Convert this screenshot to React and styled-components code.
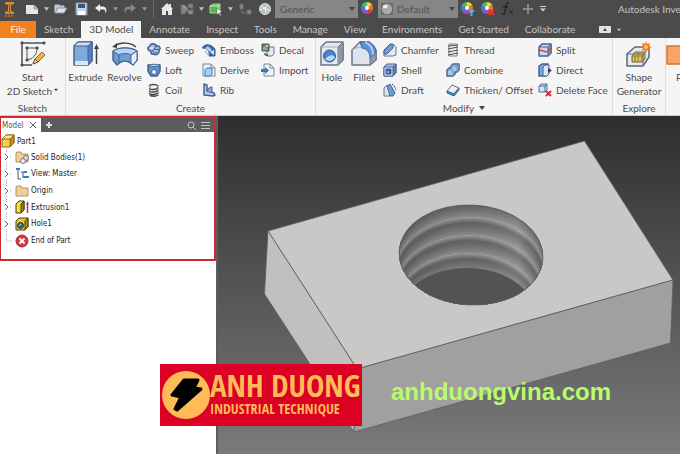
import styled, { createGlobalStyle } from "styled-components";

const GlobalStyle = createGlobalStyle`
  * {
    box-sizing: border-box;
  }

  body {
    margin: 0;
    font-family: Lato, "Open Sans", sans-serif;
    font-size: 10px;
    color: #4c4c4c;
  }

  button,
  select {
    font: inherit;
    color: inherit;
    border: 0;
    padding: 0;
    background: none;
  }

  svg {
    display: block;
    flex: none;
  }
`;

const Window = styled.div`
  display: flex;
  flex-direction: column;
  width: 100%;
  height: 100vh;
  overflow: hidden;
`;

/* ---------- title bar ---------- */

const TitleBar = styled.header`
  display: flex;
  align-items: center;
  height: 21px;
  padding-bottom: 3px;
  background: #4b4b4b;
  color: #c4c4c4;
  white-space: nowrap;
  overflow: hidden;
`;

const AppMark = styled.div`
  flex: none;
  width: 22px;
  padding-left: 3px;
`;

const Tool = styled.button`
  display: flex;
  flex: none;
  align-items: center;
  justify-content: center;
  width: ${({ $narrow }) => ($narrow ? "9px" : "20px")};
  height: 18px;
`;

const Separator = styled.span`
  flex: none;
  width: 1px;
  height: 18px;
  margin: 0 3px 0 4px;
  background: #686868;
`;

const Picker = styled.label`
  display: flex;
  flex: none;
  align-items: center;
  width: ${({ $width }) => $width};
  height: 18px;
  padding: 0 3px;
  gap: 2px;
  background: #868686;
  color: #525252;

  select {
    flex: 1;
    min-width: 0;
    padding-left: 2px;
    appearance: none;
    outline: none;
  }
`;

const Title = styled.h1`
  margin: 0 0 0 71px;
  font-size: 10px;
  font-weight: 400;
`;

/* ---------- ribbon tabs ---------- */

const Tabs = styled.nav`
  display: flex;
  flex: none;
  height: 17px;
  background: #4b4b4b;
  color: #c4c4c4;
  white-space: nowrap;
`;

const Tab = styled.button`
  padding: 0 8px;
  line-height: 17px;
  background: ${({ $active }) => ($active ? "#f5f5f5" : "transparent")};
  color: ${({ $active }) => ($active ? "#4c4c4c" : "inherit")};
`;

const FileTab = styled(Tab)`
  width: 36px;
  background: #f08120;
  color: #fff0dc;
`;

const PanelToggle = styled.button`
  display: flex;
  align-items: center;
  gap: 6px;
  margin-left: 16px;
`;

/* ---------- ribbon ---------- */

const Ribbon = styled.div`
  display: flex;
  flex: none;
  height: 78px;
  background: #f5f5f5;
  border-bottom: 1px solid #c9c9c9;
  overflow: hidden;
`;

const Group = styled.section`
  display: flex;
  flex: none;
  flex-direction: column;
  width: ${({ $width }) => $width};
  border-right: 1px solid #dedede;
  white-space: nowrap;
`;

const GroupBody = styled.div`
  display: flex;
  justify-content: ${({ $center }) => ($center ? "center" : "flex-start")};
  height: 64px;
  padding-top: 2px;
`;

const GroupName = styled.h2`
  display: flex;
  align-items: center;
  justify-content: center;
  gap: 5px;
  margin: 0;
  font-size: 10px;
  font-weight: 400;
  line-height: 14px;
`;

const BigButton = styled.button`
  display: flex;
  flex: none;
  flex-direction: column;
  align-items: center;
  width: ${({ $width }) => $width};
  line-height: 14px;

  svg {
    margin: 1px 0 3px;
  }
`;

const BigLabel = styled.span`
  display: flex;
  align-items: center;
  gap: 2px;
`;

const Commands = styled.div`
  display: grid;
  grid-template-columns: ${({ $columns }) => $columns};
  grid-template-rows: repeat(3, 20px);
  grid-auto-flow: column;
  padding-left: 3px;
`;

const Command = styled.button`
  display: flex;
  align-items: center;
  gap: 4px;
`;

/* ---------- model browser ---------- */

const Workspace = styled.main`
  position: relative;
  display: flex;
  flex: 1;
  min-height: 0;
`;

const Sidebar = styled.aside`
  flex: none;
  width: 218px;
  background: #fff;
  border-right: 2px solid #5c5c5c;
`;

const Browser = styled.section`
  border: 2px solid #d0292e;
  border-left-width: 1px;
  height: 145px;
  font-family: "DejaVu Sans Condensed", "DejaVu Sans", sans-serif;
  font-size: 8px;
  color: #222;
`;

const BrowserHead = styled.div`
  display: flex;
  align-items: center;
  height: 14px;
  padding-right: 4px;
  gap: 5px;
  background: #5c5c5c;
`;

const BrowserTab = styled.button`
  display: flex;
  align-items: center;
  gap: 6px;
  width: 40px;
  height: 14px;
  padding-left: 1px;
  background: #fff;
  color: #555;
`;

const HeadActions = styled.div`
  display: flex;
  gap: 5px;
  margin-left: auto;
`;

const Tree = styled.ul`
  display: flex;
  flex-direction: column;
  min-height: 117px;
  margin: 0;
  padding: 2px 0 0;
  list-style: none;
`;

const TreeItem = styled.li`
  display: flex;
  flex: 1;
  align-items: center;
  gap: 2px;
`;

const Branch = styled.span`
  flex: none;
  align-self: stretch;
  width: 12px;
  display: flex;
  align-items: center;
`;

/* ---------- viewport ---------- */

const Viewport = styled.section`
  flex: 1;
  min-width: 0;
  background: linear-gradient(#2e2e2e, #545454 50%, #7a7a7a);
  overflow: hidden;

  svg {
    width: 100%;
    height: 100%;
  }
`;

const Banner = styled.div`
  position: absolute;
  left: 160px;
  bottom: 28px;
  display: flex;
  align-items: center;
  width: 202px;
  height: 62px;
  padding-left: 2px;
  background: #dc0024;
  color: #ffbb58;
  font-family: "Open Sans Condensed", "Roboto Condensed",
    "Liberation Sans Narrow", "Liberation Sans", sans-serif;
  font-weight: 700;
  white-space: nowrap;
`;

const BannerName = styled.div`
  font-size: 31px;
  line-height: 28px;
`;

const BannerLine = styled.div`
  font-size: 14px;
  line-height: 20px;
`;

const SiteLink = styled.a`
  position: absolute;
  left: 391px;
  bottom: 48px;
  color: #b8fc6c;
  font: 700 24px/28px "Liberation Sans", Arial, sans-serif;
  text-decoration: none;
`;

/* ---------- icons ---------- */

const Icon = ({ size = 14, box = size, children }) => (
  <svg
    width={size}
    height={size}
    viewBox={`0 0 ${box} ${box}`}
    fill="none"
    stroke="#47638f"
    strokeLinejoin="round"
    aria-hidden="true"
  >
    {children}
  </svg>
);

const Caret = ({ color = "#c9c9c9", w = 5 }) => (
  <svg width={w} height="4" viewBox="0 0 6 4" aria-hidden="true">
    <path d="M0 0h6L3 4z" fill={color} />
  </svg>
);

const Wheel = ({ children }) => (
  <Icon box={14}>
    <g stroke="none">
      <path d="M6 6V0a6 6 0 0 1 5.200 3z" fill="#f5d33a" />
      <path d="M6 6l5.200-3a6 6 0 0 1 0 6z" fill="#e87a2b" />
      <path d="M6 6l5.200 3A6 6 0 0 1 6 12z" fill="#e23b46" />
      <path d="M6 6v6A6 6 0 0 1 .8 9z" fill="#9a4fd0" />
      <path d="M6 6L.8 9a6 6 0 0 1 0-6z" fill="#3f7fe0" />
      <path d="M6 6L.8 3A6 6 0 0 1 6 0z" fill="#55bd55" />
      <circle cx="6" cy="6" r="2" fill="#fff" />
      {children}
    </g>
  </Icon>
);

const icons = {
  mark: (
    <svg width="13" height="17" viewBox="0 0 13 17" aria-hidden="true">
      <path d="M2 1h9v2l-3 1v6l3 1v2H2v-2l3-1V4L2 3z" fill="#d88a35" />
      <path d="M6 3h1v9H6z" fill="#8a5118" />
      <path d="M2 15h9" stroke="#b06a20" strokeWidth="2" strokeDasharray="2 1" />
    </svg>
  ),
  page: (
    <Icon>
      <path d="M1 3h8l4 4v5H1z" fill="#e4e6ea" stroke="none" />
      <path d="M9 3v4h4" fill="#b8bcc4" stroke="#9ba0aa" />
    </Icon>
  ),
  open: (
    <Icon>
      <path d="M1 11V3h4l1 1h4v2" fill="#b9c2cf" stroke="#c6ced9" />
      <path d="M1 11l3-5h9l-3 5z" fill="#dde3ea" stroke="#8793a3" />
    </Icon>
  ),
  save: (
    <Icon>
      <rect x="2" y="1" width="11" height="12" fill="#c9d4e2" stroke="#7f93ae" />
      <path d="M4 2h7v4H4z" fill="#39557c" stroke="none" />
      <path d="M4 9h7v4H4z" fill="#fff" stroke="none" />
    </Icon>
  ),
  undo: (
    <Icon>
      <path d="M6 2L1 6l5 4V7.500h3c2 0 3 2 2 4.500 3-4 1-7-2-7.500H6z" fill="#eee" stroke="none" />
    </Icon>
  ),
  redo: (
    <Icon>
      <path d="M8 2l5 4-5 4V7.500H5c-2 0-3 2-2 4.500C0 8 2 5 5 4.500h3z" fill="#858585" stroke="none" />
    </Icon>
  ),
  home: (
    <Icon>
      <path d="M1 7l6-6 2 2V2h2v3l2 2h-1v6H8V9H6v4H2V7z" fill="#e6e8ea" stroke="none" />
    </Icon>
  ),
  material: (
    <Icon>
      <path d="M1 3h4l3 3-3 6H1zM8 2h5v4H9zM8 9l5-2v5H8z" fill="#858585" stroke="#666" />
      <path d="M2 3l10 9" stroke="#aaa" />
    </Icon>
  ),
  pick: (
    <Icon>
      <path d="M1 4l3-2h7v7l-2 2H1z" fill="#57b455" stroke="#9bdb95" />
      <path d="M1 4h8v7M9 4l2-2" stroke="#d2f0cd" />
      <path d="M8 6v7l2-2 1 3 1-1-1-3h2z" fill="#fff" stroke="#555" strokeWidth=".5" />
    </Icon>
  ),
  link: (
    <Icon>
      <path d="M2 2h3v5H2zM9 8h4v4H9z" fill="#8b8b8b" stroke="#6c6c6c" />
      <path d="M4 8v3h4" stroke="#777" />
    </Icon>
  ),
  globe: (
    <Icon>
      <circle cx="7" cy="7" r="5.500" fill="#b5bdc2" stroke="#d8dcde" />
      <path d="M3 4l4 2 3-3M7 6l1 5M2 8l5-2 5 3" stroke="#f0f0f0" />
    </Icon>
  ),
  ball: (
    <Icon size={12} box={14}>
      <path d="M0 0h14v14H0z" fill="#6b6b6b" stroke="none" />
      <circle cx="7" cy="7" r="6" fill="#a9a9a9" stroke="none" />
      <ellipse cx="5" cy="4" rx="3" ry="2" fill="#efefef" stroke="none" />
    </Icon>
  ),
  wheel: <Wheel />,
  wheelPin: (
    <Wheel>
      <path d="M7 8h7l-2.500 3v3h-2v-3z" fill="#49b4e6" />
    </Wheel>
  ),
  wheelCut: (
    <Wheel>
      <path d="M8 8l5 5M13 8l-5 5" stroke="#e23434" strokeWidth="2" />
    </Wheel>
  ),
  fx: (
    <Icon>
      <path d="M8 1C5 0 5 4 4.500 7S4 13 1 12M2 5h5" stroke="#262626" strokeWidth="1.500" />
      <path d="M8 8l4 4M12 8l-4 4" stroke="#262626" />
    </Icon>
  ),
  plus: (
    <Icon>
      <path d="M7 2v10M2 7h10" stroke="#8a8a8a" strokeWidth="2" />
    </Icon>
  ),
  more: (
    <Icon size={8}>
      <path d="M1 1.500h6" stroke="#d0d0d0" />
      <path d="M1 3.500h6l-3 3z" fill="#d0d0d0" stroke="none" />
    </Icon>
  ),

  sketch: (
    <Icon size={26}>
      <g stroke="#4e5258">
        <path d="M2 2v22M2 2h22M2 24h10" strokeWidth="1.500" />
        <path d="M7 19V7h10c0 7-4 11-10 12z" />
        <path d="M1 1h2v2H1zM23 1h2v2h-2zM1 23h2v2H1zM6 6h2v2H6zM16 6h2v2h-2zM6 18h2v2H6z" fill="#4e5258" />
      </g>
      <path d="M13 23l2-5 7-7 3 3-7 7z" fill="#f1b53b" stroke="#8a6322" />
      <path d="M13 23l2-5 3 3z" fill="#f4e1bb" stroke="#6a5330" />
    </Icon>
  ),
  extrude: (
    <Icon size={26}>
      <path d="M1 5l4-4h14v19l-4 4H1z" fill="#7fa8dd" strokeWidth="1.500" />
      <path d="M1 5l4-4h14l-4 4z" fill="#c9dcf3" />
      <path d="M15 5l4-4v19l-4 4z" fill="#5580bd" />
      <path d="M2 20h13v4H2z" fill="#dce6f2" stroke="none" />
      <path d="M23.500 23V6" stroke="#444" strokeWidth="1.500" />
      <path d="M21 8l2.500-5L26 8z" fill="#444" stroke="none" />
    </Icon>
  ),
  revolve: (
    <Icon size={26}>
      <path d="M3 5c5-4 15-4 21 1" stroke="#3f3f3f" strokeWidth="1.500" />
      <path d="M0 6l5-4v5z" fill="#3f3f3f" stroke="none" />
      <path d="M1 10c6-4 18-4 24 0v9l-4 5-4-3c-2-1-6-1-8 0l-4 3-4-5z" fill="#6e9cd8" strokeWidth="1.500" />
      <path d="M1 10c6-4 18-4 24 0l-6 4c-3-2-9-2-12 0z" fill="#b9d3f2" />
      <path d="M19 14l6-4v9l-4 5-2-2z" fill="#e8eef6" />
      <path d="M7 14v8" />
    </Icon>
  ),
  hole: (
    <Icon size={26}>
      <path d="M2 6l5-5h17v18l-5 5H2z" fill="#e4e9f0" stroke="#6a7484" strokeWidth="1.500" />
      <path d="M19 6l5-5v18l-5 5z" fill="#8d99aa" stroke="#6a7484" />
      <path d="M2 6h17v18" stroke="#a4aebd" />
      <circle cx="10.500" cy="15" r="6" fill="#4a80cf" stroke="#35578f" />
      <path d="M6 18a6 6 0 0 0 10-2c-3-3-6-2-10 2z" fill="#b9d6f5" stroke="none" />
    </Icon>
  ),
  fillet: (
    <Icon size={26}>
      <path d="M1 24V9l8-8h9l7 8v10l-6 5z" fill="#dfe4ec" stroke="#6a7484" strokeWidth="1.500" />
      <path d="M9 1h8c5 1 8 5 8 11l-6 5c0-6-3-9-8-10z" fill="#5d92d8" />
      <path d="M14 1c5 2 8 6 8 13" stroke="#a8cbf2" strokeWidth="2" />
      <path d="M19 17v7l6-5v-7z" fill="#8f9bad" stroke="#6a7484" />
      <path d="M1 9c5-3 8-3 10-2" stroke="#a4aebd" />
    </Icon>
  ),
  shape: (
    <Icon size={26}>
      <path d="M1 13l8-7h14v10l-6 9H1z" fill="#e5e9f0" stroke="#5b6574" strokeWidth="1.500" />
      <path d="M6 15l3-4h10v7l-3 3H6z" fill="#e3c44a" stroke="#77672a" />
      <path d="M6 15h10v6M16 15l3-4M9 15v6M12 12v9" stroke="#8f7c32" />
      <path d="M1 13h16v12M17 13l6-7" stroke="#526ea0" />
      <path d="M20 0l1 3 3-1-1 3 3 1-3 1 1 3-3-1-1 3-1-3-3 1 1-3-3-1 3-1-1-3 3 1z" fill="#ee7b22" stroke="none" />
      <circle cx="20" cy="6" r="2" fill="#ffc45e" stroke="none" />
    </Icon>
  ),
  plan: (
    <Icon size={26}>
      <path d="M1 5h24v18H1z" fill="#f9a368" stroke="#d5742f" strokeWidth="1.500" />
    </Icon>
  ),

  sweep: (
    <Icon>
      <path d="M3 3c0-3 6-3 6 0 4-1 5 3 3 4 1 3-3 6-5 4-2 1-4-1-3-3-4 0-4-4-1-5z" fill="#9dbce6" strokeWidth="1.500" />
      <path d="M4 4c2 2 5 2 5-1M5 8c1-2 5-2 7-1M6 8c0 2 3 3 4 1" stroke="#3f649c" />
      <circle cx="5" cy="5" r="1.500" fill="#e2edfb" stroke="none" />
    </Icon>
  ),
  loft: (
    <Icon>
      <path d="M1 2l3 1h6l3-1v6l-3 5H4L1 8z" fill="#5f8fd6" strokeWidth="1.500" />
      <path d="M1 2c3-1 9-1 12 0-3 2-9 2-12 0z" fill="#c7dbf4" />
      <circle cx="7" cy="9" r="2.500" fill="#eef3fa" />
    </Icon>
  ),
  coil: (
    <Icon>
      <path d="M2 3c2-2 7-2 9 0M2 5.500c3 2 7 1 9-1M2 8c3 2 7 1 9-1M2 10.500c3 2 7 1 9-1M3 12.500c3 1 6 1 8-.5" stroke="#45474b" strokeWidth="1.500" />
      <path d="M3 1v12M11 2v11" stroke="#77797d" />
    </Icon>
  ),
  emboss: (
    <Icon>
      <path d="M0 5c3-5 9-4 13 1v7H7C8 8 5 5 0 5z" fill="#37659f" />
      <path d="M3 5l3-2 4 4-2 2z" fill="#a9cdf5" stroke="none" />
      <path d="M8 9l4-2v5z" fill="#dfeaf8" stroke="none" />
      <path d="M3 8l3 4" stroke="#8b9bb5" />
    </Icon>
  ),
  derive: (
    <Icon>
      <path d="M1 1h8l4 4v8H1z" fill="#eef1f5" stroke="#7b8594" />
      <path d="M9 1v4h4" stroke="#7b8594" />
      <path d="M3 7l2-2h5v6l-2 2H3z" fill="#9fd0f5" stroke="#3c7fc0" />
    </Icon>
  ),
  rib: (
    <Icon>
      <path d="M2 1l3 1v6l7 2 1 2-2 1-9-1z" fill="#b5cdec" strokeWidth="1.500" />
      <path d="M5 8c1-3 3-4 5-4v5" fill="#7fa8dd" />
    </Icon>
  ),
  decal: (
    <Icon>
      <path d="M6 4h7v7l-2 2H6z" fill="#e6e9ee" stroke="#6f7886" />
      <path d="M1 1h7v7H1z" fill="#5c7f9f" stroke="#555" />
      <path d="M2 5l2-2 3 4H2z" fill="#8fc05a" stroke="none" />
      <path d="M5 2h2v2H5z" fill="#f4d94d" stroke="none" />
      <path d="M4 10v2h3" stroke="#222" />
    </Icon>
  ),
  import: (
    <Icon>
      <path d="M3 1h6l4 4v8H3z" fill="#f1f3f6" stroke="#7b8594" />
      <path d="M9 1v4h4" stroke="#7b8594" />
      <path d="M0 6h4V4l4 3.500L4 11V9H0z" fill="#2c7ec4" stroke="none" />
    </Icon>
  ),
  chamfer: (
    <Icon>
      <path d="M1 7l6-6h3l3 3v8l-3 1H1z" fill="#e4e9f0" stroke="#6a7484" />
      <path d="M1 8l6-7 3 1v3l-6 6H1z" fill="#6b9add" />
    </Icon>
  ),
  shell: (
    <Icon>
      <path d="M1 4l3-3h9v9l-3 3H1z" fill="#a9bfdf" />
      <path d="M10 4l3-3v9l-3 3z" fill="#6682ae" />
      <path d="M1 4h9v9H1z" fill="#e1e9f4" />
      <path d="M3 6h5v5H3z" fill="#2c62b4" />
      <path d="M4 8h2v2H4z" fill="#8db9ee" stroke="none" />
    </Icon>
  ),
  draft: (
    <Icon>
      <path d="M1 5l3-3 3 4v7H1z" fill="#dfe7f1" stroke="#6a7484" />
      <path d="M4 3l3-2 5 9-2 3H7z" fill="#6b9add" />
      <path d="M9 1c2 1 3 3 4 6" stroke="#444" strokeDasharray="2 1" />
    </Icon>
  ),
  thread: (
    <Icon>
      <path d="M3 1h8v12H3z" fill="#e9ebee" stroke="#797e86" />
      <path d="M2 3l10-1M2 6l10-2M2 9l10-2M2 12l10-2" stroke="#50545b" />
    </Icon>
  ),
  combine: (
    <Icon>
      <path d="M5 3l2-2h6v6l-2 2H9v2l-2 2H1V7l2-2h2z" fill="#a9c6ec" strokeWidth="1.500" />
      <path d="M5 3h6v6M11 3l2-2M1 7h6v6" stroke="#6f92c4" />
    </Icon>
  ),
  thicken: (
    <Icon>
      <path d="M1 8l5-6 7 3-5 6z" fill="#e9eef4" stroke="#64707f" />
      <path d="M1 8l7 3v2L1 10z" fill="#3d9be0" stroke="#2a6ba5" />
      <path d="M8 11l5-6v2l-5 6z" fill="#6b7a8c" stroke="#556272" />
    </Icon>
  ),
  split: (
    <Icon>
      <path d="M1 4l3-3h9v9l-3 3H1z" fill="#c7daf3" strokeWidth="1.500" />
      <path d="M10 4l3-3v9l-3 3z" fill="#7394c6" />
      <path d="M1 4h9" />
      <path d="M1 8c3-3 5 3 9 0l3-3" stroke="#d8433f" strokeWidth="1.500" />
    </Icon>
  ),
  direct: (
    <Icon>
      <path d="M1 3l3-2h6v10l-2 2H1z" fill="#7da7de" strokeWidth="1.500" />
      <path d="M5 4l2-2h4v9l-2 2H5z" fill="#dce8f7" />
      <path d="M10 5l4 2.500-4 2.500z" fill="#2e3b52" stroke="none" />
    </Icon>
  ),
  deleteFace: (
    <Icon>
      <path d="M1 3l2-2h6v6L7 9H1z" fill="#d4e2f5" stroke="#4a6ca3" />
      <path d="M1 3h6v6M7 3l2-2" stroke="#4a6ca3" />
      <path d="M8 8l5 5M13 8l-5 5" stroke="#cf2f35" strokeWidth="2" />
    </Icon>
  ),

  part: (
    <Icon>
      <path d="M1 5l4-4h8v8l-4 4H1z" fill="#f7cf4f" stroke="#8b6a16" />
      <path d="M9 5l4-4v8l-4 4z" fill="#c08d1c" stroke="#8b6a16" />
      <path d="M1 5l4-4h8L9 5z" fill="#fdeaa2" stroke="#8b6a16" />
    </Icon>
  ),
  folder: (
    <Icon>
      <path d="M1 12V3l1-1h4l1 2h6v8z" fill="#f0cf98" stroke="#b39059" />
    </Icon>
  ),
  bodies: (
    <Icon>
      <path d="M1 12V3l1-1h4l1 2h6v8z" fill="#f0cf98" stroke="#b39059" />
      <circle cx="11" cy="8" r="2.500" fill="#dde3ea" stroke="#69758a" />
      <circle cx="8" cy="11" r="2.500" fill="#eef1f5" stroke="#69758a" />
    </Icon>
  ),
  view: (
    <Icon>
      <path d="M3 3v9h3M8 5v6M6 5h4M8 10h2" stroke="#44546a" />
      <path d="M1 1h4v2H1zM9 4h3v2H9zM9 9h5v2H9z" fill="#2f86b8" stroke="none" />
    </Icon>
  ),
  extrusion: (
    <Icon>
      <path d="M1 4l3-3h5v9l-3 3H1z" fill="#f5e234" stroke="#3d3a12" />
      <path d="M6 4l3-3v9l-3 3z" fill="#8d8412" stroke="#3d3a12" />
      <path d="M12.500 13V4" stroke="#b7383b" strokeWidth="1.500" />
      <path d="M11 4.500L12.500 1 14 4.500z" fill="#b7383b" stroke="none" />
    </Icon>
  ),
  hole1: (
    <Icon>
      <path d="M1 4l3-3h9v9l-3 3H1z" fill="#e6c936" stroke="#4b4416" />
      <path d="M10 4l3-3v9l-3 3z" fill="#a28a1a" stroke="#4b4416" />
      <circle cx="5.500" cy="8.500" r="3" fill="#3c6688" stroke="#2a3a48" />
      <path d="M4 9l2-2" stroke="#b9d6ea" />
    </Icon>
  ),
  end: (
    <Icon>
      <circle cx="7" cy="7" r="6" fill="#d9343a" stroke="#8a3a3c" />
      <path d="M4.500 4.500l5 5M9.500 4.500l-5 5" stroke="#fff" strokeWidth="2" />
    </Icon>
  ),
};

/* ---------- data ---------- */

const tabs = [
  "Sketch",
  "3D Model",
  "Annotate",
  "Inspect",
  "Tools",
  "Manage",
  "View",
  "Environments",
  "Get Started",
  "Collaborate",
];

const createCommands = [
  ["sweep", "Sweep"],
  ["loft", "Loft"],
  ["coil", "Coil"],
  ["emboss", "Emboss"],
  ["derive", "Derive"],
  ["rib", "Rib"],
  ["decal", "Decal"],
  ["import", "Import"],
];

const modifyCommands = [
  ["chamfer", "Chamfer"],
  ["shell", "Shell"],
  ["draft", "Draft"],
  ["thread", "Thread"],
  ["combine", "Combine"],
  ["thicken", "Thicken/ Offset"],
  ["split", "Split"],
  ["direct", "Direct"],
  ["deleteFace", "Delete Face"],
];

const treeNodes = [
  ["bodies", "Solid Bodies(1)"],
  ["view", "View: Master"],
  ["folder", "Origin"],
  ["extrusion", "Extrusion1"],
  ["hole1", "Hole1"],
  ["end", "End of Part"],
];

// Brightness of the threaded wall at a depth below the rim
const DEPTH = 63;
const CRESTS = [-5, 13, 31, 49, 67];
const wallShade = (depth) => {
  const next = CRESTS.findIndex((c) => c >= depth);
  if (CRESTS[next] === depth) return 158;
  const t = (depth - CRESTS[next - 1]) / 18;
  return Math.round(t < 0.28 ? 150 - t * 175 : 100 + ((t - 0.28) / 0.72) ** 1.4 * 46);
};

const wall = Array.from({ length: DEPTH }, (_, depth) => {
  const v = wallShade(depth);
  return { depth, fill: `rgb(${v}, ${v}, ${v})` };
});

/* ---------- parts ---------- */

const CommandGrid = ({ items, columns }) => (
  <Commands $columns={columns}>
    {items.map(([icon, label]) => (
      <Command key={label} type="button">
        {icons[icon]}
        {label}
      </Command>
    ))}
  </Commands>
);

const TreeBranch = ({ last }) => (
  <Branch>
    <svg width="11" height="16" viewBox="0 0 11 16" fill="none" aria-hidden="true">
      <path d={last ? "M5.500 0v8H11" : "M5.500 0v3M5.500 13v3M9 8h2"} stroke="#aaa" strokeDasharray="1 1" />
      {!last && <path d="M4 5l3 3-3 3" stroke="#666" />}
    </svg>
  </Branch>
);

const Block = () => (
  <svg viewBox="218 116 462 338" preserveAspectRatio="xMidYMid meet" role="img" aria-label="Block with threaded hole">
    <defs>
      <clipPath id="rim">
        <ellipse cx="471" cy="255" rx="72" ry="50" transform="rotate(3 471 255)" />
      </clipPath>
      <linearGradient id="side" x1="0" x2="1">
        <stop offset="0" stopColor="#000" stopOpacity=".1" />
        <stop offset=".4" stopColor="#000" stopOpacity=".02" />
        <stop offset=".8" stopColor="#fff" stopOpacity=".12" />
        <stop offset="1" stopColor="#000" stopOpacity=".1" />
      </linearGradient>
    </defs>
    <g stroke="#5f5e5c" strokeWidth=".8" strokeLinejoin="round">
      <path d="M268 231L584.500 141 673 280 357 369z" fill="#c9c8c6" />
      <path d="M268 231L357 369 354 432 264.500 294z" fill="#c1c0be" />
      <path d="M357 369L673 280 670.500 343 354 432z" fill="#a1a09e" />
    </g>
    <g clipPath="url(#rim)">
      {wall.map(({ depth, fill }) => (
        <ellipse key={depth} cx={471 - depth / 16} cy={255 + depth} rx={74 - depth / 16} ry="51" fill={fill} />
      ))}
      <path d="M390 195h160v115H390z" fill="url(#side)" />
      <ellipse cx="467" cy="318" rx="70" ry="50" fill="#535353" />
    </g>
    <ellipse cx="471" cy="255" rx="72" ry="50" transform="rotate(3 471 255)" fill="none" stroke="#5a5a5a" strokeWidth=".8" />
  </svg>
);

const App = () => (
  <>
    <GlobalStyle />
    <Window>
      <TitleBar>
        <AppMark>{icons.mark}</AppMark>
        <Tool aria-label="New">{icons.page}</Tool>
        <Tool $narrow aria-label="New options"><Caret /></Tool>
        <Tool aria-label="Open">{icons.open}</Tool>
        <Tool aria-label="Save">{icons.save}</Tool>
        <Tool aria-label="Undo">{icons.undo}</Tool>
        <Tool $narrow aria-label="Undo options"><Caret color="#999" /></Tool>
        <Tool aria-label="Redo">{icons.redo}</Tool>
        <Tool $narrow aria-label="Redo options"><Caret color="#999" /></Tool>
        <Separator />
        <Tool aria-label="Home">{icons.home}</Tool>
        <Tool aria-label="Material">{icons.material}</Tool>
        <Tool $narrow aria-label="Material options"><Caret /></Tool>
        <Tool aria-label="Select">{icons.pick}</Tool>
        <Tool $narrow aria-label="Select options"><Caret /></Tool>
        <Tool aria-label="Links">{icons.link}</Tool>
        <Tool aria-label="Appearance">{icons.globe}</Tool>
        <Picker $width="83px">
          <select aria-label="Material type">
            <option>Generic</option>
          </select>
          <Caret color="#444" w={6} />
        </Picker>
        <Tool aria-label="Colors">{icons.wheel}</Tool>
        <Picker $width="80px">
          {icons.ball}
          <select aria-label="Appearance type">
            <option>Default</option>
          </select>
          <Caret color="#444" w={6} />
        </Picker>
        <Tool aria-label="Adjust">{icons.wheelPin}</Tool>
        <Tool aria-label="Clear">{icons.wheelCut}</Tool>
        <Tool aria-label="Parameters">{icons.fx}</Tool>
        <Tool aria-label="Add">{icons.plus}</Tool>
        <Tool $narrow aria-label="Customize">{icons.more}</Tool>
        <Title>Autodesk Inve</Title>
      </TitleBar>

      <Tabs>
        <FileTab type="button">File</FileTab>
        {tabs.map((name) => (
          <Tab key={name} type="button" $active={name === "3D Model"}>
            {name}
          </Tab>
        ))}
        <PanelToggle type="button" aria-label="Minimize ribbon">
          <svg width="12" height="7" viewBox="0 0 12 7" aria-hidden="true">
            <rect width="12" height="7" rx="1" fill="#e2e2e2" />
            <path d="M4 5l2-3 2 3z" fill="#4b4b4b" />
          </svg>
          <Caret w={4} />
        </PanelToggle>
      </Tabs>

      <Ribbon>
        <Group $width="66px">
          <GroupBody $center>
            <BigButton type="button" $width="60px">
              {icons.sketch}
              <span>Start</span>
              <BigLabel>
                2D Sketch <Caret color="#444" w={4} />
              </BigLabel>
            </BigButton>
          </GroupBody>
          <GroupName>Sketch</GroupName>
        </Group>

        <Group $width="250px">
          <GroupBody>
            <BigButton type="button" $width="39px">
              {icons.extrude}
              Extrude
            </BigButton>
            <BigButton type="button" $width="39px">
              {icons.revolve}
              Revolve
            </BigButton>
            <CommandGrid items={createCommands} columns="55px 59px 54px" />
          </GroupBody>
          <GroupName>Create</GroupName>
        </Group>

        <Group $width="297px">
          <GroupBody>
            <BigButton type="button" $width="32px">
              {icons.hole}
              Hole
            </BigButton>
            <BigButton type="button" $width="32px">
              {icons.fillet}
              Fillet
            </BigButton>
            <CommandGrid items={modifyCommands} columns="63px 92px 75px" />
          </GroupBody>
          <GroupName>
            Modify <Caret color="#444" w={6} />
          </GroupName>
        </Group>

        <Group $width="53px">
          <GroupBody $center>
            <BigButton type="button" $width="50px">
              {icons.shape}
              <span>Shape</span>
              <span>Generator</span>
            </BigButton>
          </GroupBody>
          <GroupName>Explore</GroupName>
        </Group>

        <Group $width="46px">
          <GroupBody>
            <BigButton type="button" $width="26px">
              {icons.plan}
              P
            </BigButton>
          </GroupBody>
        </Group>
      </Ribbon>

      <Workspace>
        <Sidebar>
          <Browser>
            <BrowserHead>
              <BrowserTab type="button">
                Model
                <svg width="6" height="6" viewBox="0 0 6 6" aria-hidden="true">
                  <path d="M0 0l6 6M6 0L0 6" stroke="#666" />
                </svg>
              </BrowserTab>
              <svg width="6" height="6" viewBox="0 0 6 6" aria-hidden="true">
                <path d="M3 0v6M0 3h6" stroke="#ddd" strokeWidth="2" />
              </svg>
              <HeadActions>
                <svg width="9" height="9" viewBox="0 0 9 9" fill="none" stroke="#c4c4c4" aria-hidden="true">
                  <circle cx="4" cy="4" r="3" />
                  <path d="M6 6l3 3" />
                </svg>
                <svg width="9" height="9" viewBox="0 0 9 9" stroke="#c4c4c4" aria-hidden="true">
                  <path d="M0 1.500h9M0 4.500h9M0 7.500h9" />
                </svg>
              </HeadActions>
            </BrowserHead>
            <Tree>
              <TreeItem>
                {icons.part}
                Part1
              </TreeItem>
              {treeNodes.map(([icon, label]) => (
                <TreeItem key={label}>
                  <TreeBranch last={icon === "end"} />
                  {icons[icon]}
                  {label}
                </TreeItem>
              ))}
            </Tree>
          </Browser>
        </Sidebar>

        <Viewport>
          <Block />
        </Viewport>

        <Banner>
          <svg width="48" height="48" viewBox="0 0 48 48" aria-hidden="true">
            <circle cx="24" cy="24" r="24" fill="#ffbb58" />
            <path
              d="M22 9h14l-4 8 7 1L15 39l-2-1 6-12-9-2z"
              stroke="#000"
              strokeWidth="3"
              strokeLinejoin="round"
            />
          </svg>
          <div>
            <BannerName>ANH DUONG</BannerName>
            <BannerLine>INDUSTRIAL TECHNIQUE</BannerLine>
          </div>
        </Banner>
        <SiteLink href="#">anhduongvina.com</SiteLink>
      </Workspace>
    </Window>
  </>
);

export default App;
